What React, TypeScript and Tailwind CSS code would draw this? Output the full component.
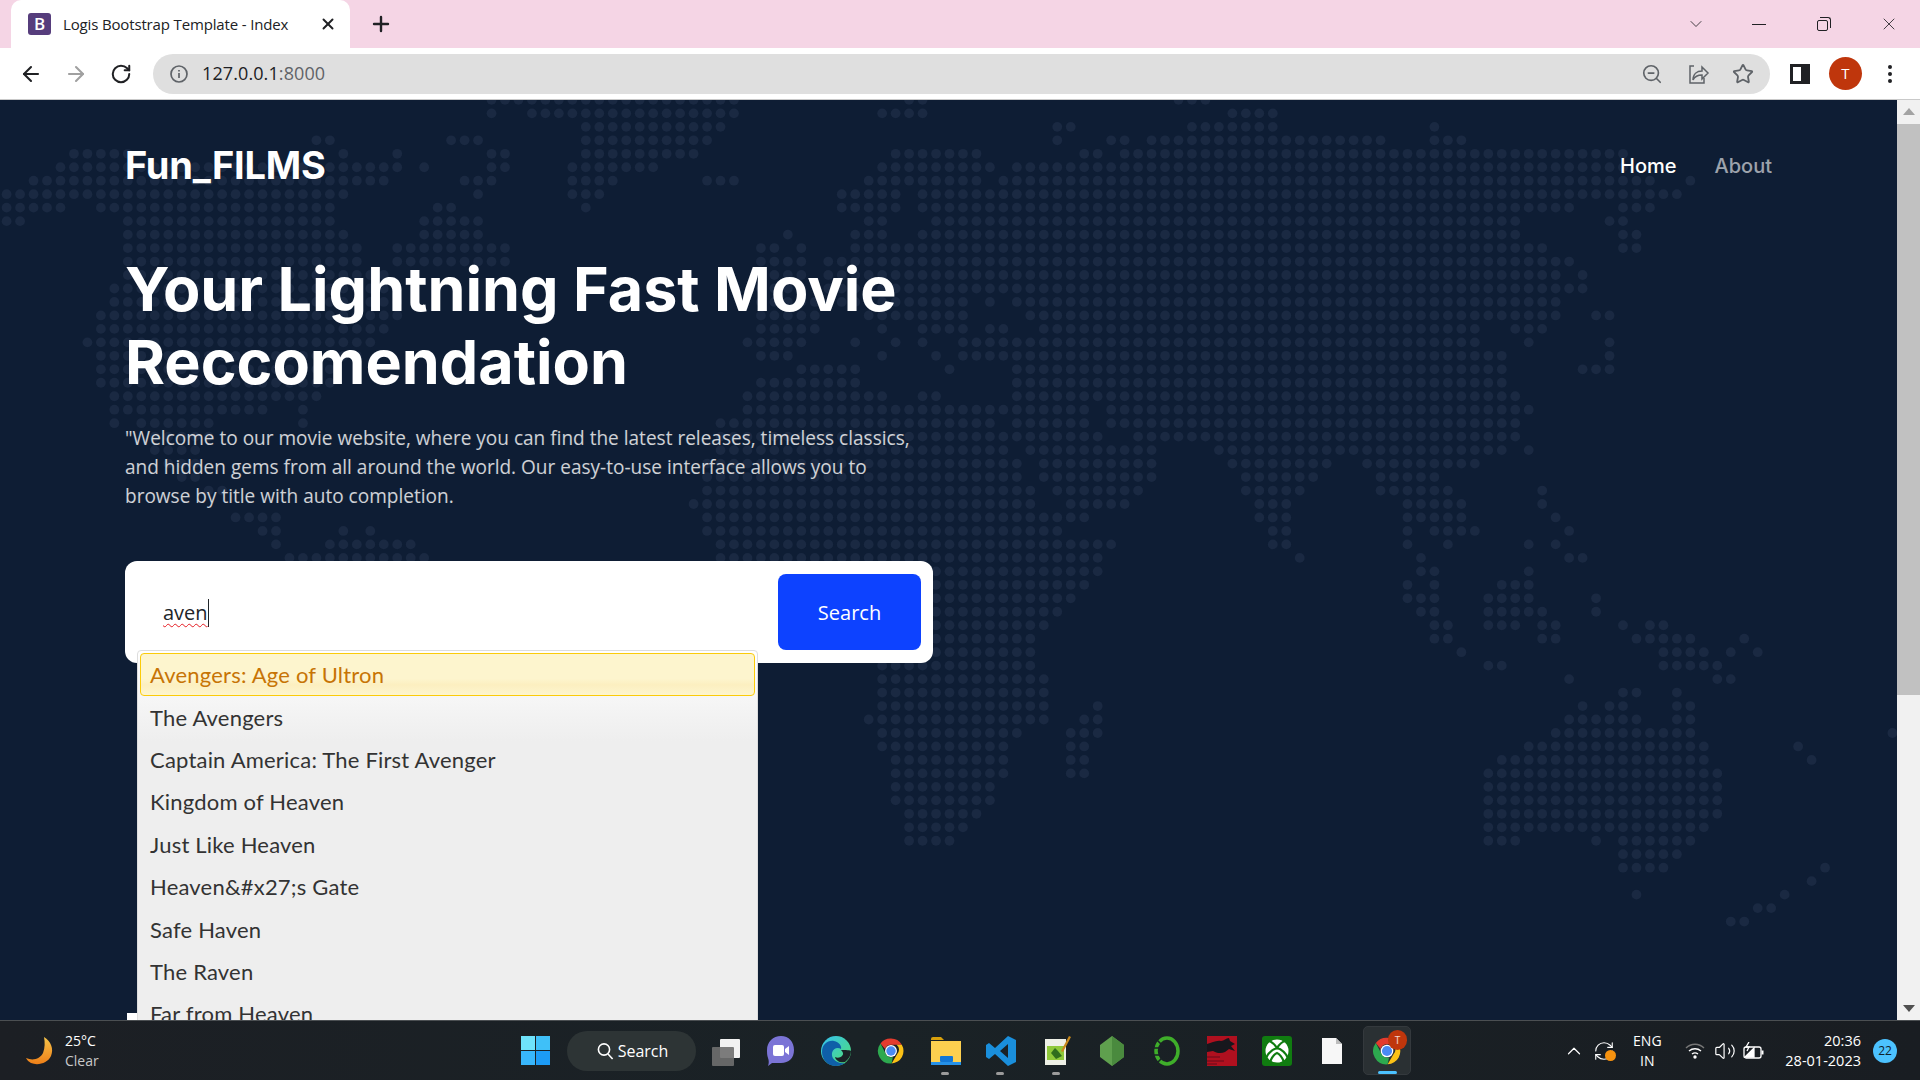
import { ArrowLeft, ArrowRight, ChevronDown, ChevronUp, Plus, RefreshCw, RotateCw, Star, Volume2, X, ZoomOut } from "lucide-react";

// runs of land dots: [row, fromX, toX, fromX, toX, ...] in page pixels
const MAP_ROWS: number[][] = [
  [0, 490, 735, 906, 925, 1178, 1207],
  [1, 490, 490, 527, 738, 878, 925, 1228, 1275],
  [2, 582, 726, 1053, 1075, 1189, 1275, 1436, 1436],
  [3, 318, 331, 450, 481, 582, 710, 1057, 1057, 1111, 1129, 1150, 1386, 1432, 1468],
  [4, 70, 125, 343, 343, 398, 398, 490, 508, 582, 698, 893, 979, 1082, 1100, 1121, 1629],
  [5, 55, 398, 423, 423, 490, 508, 570, 658, 879, 993, 1014, 1618],
  [6, 28, 389, 462, 496, 570, 615, 704, 738, 868, 979, 1004, 1654, 1691, 1691],
  [7, 0, 346, 478, 478, 570, 603, 839, 900, 921, 1682],
  [8, 0, 61, 98, 334, 438, 453, 585, 585, 839, 900, 921, 1575, 1621, 1654],
  [9, 0, 21, 125, 334, 423, 481, 868, 886, 932, 1521, 1607, 1629],
  [10, 125, 346, 423, 481, 789, 789, 854, 886, 921, 1521, 1621, 1643],
  [11, 125, 361, 395, 508, 760, 775, 799, 799, 854, 1546, 1621, 1643],
  [12, 125, 361, 395, 508, 760, 808, 825, 1575],
  [13, 125, 380, 760, 800, 825, 1561, 1584, 1584],
  [14, 110, 398, 760, 808, 825, 1589],
  [15, 110, 398, 760, 818, 840, 968, 989, 989, 1014, 1561],
  [16, 98, 398, 760, 818, 868, 968, 1029, 1561, 1596, 1614],
  [17, 98, 389, 760, 818, 882, 882, 921, 968, 989, 1007, 1043, 1479, 1514, 1546],
  [18, 83, 374, 744, 787, 800, 800, 854, 854, 896, 896, 921, 921, 961, 1479, 1529, 1529, 1611, 1611],
  [19, 98, 361, 760, 793, 882, 882, 936, 936, 961, 1507, 1611, 1611],
  [20, 98, 334, 799, 857, 950, 950, 1014, 1507, 1582, 1611],
  [21, 98, 334, 760, 857, 1014, 1507],
  [22, 110, 321, 744, 888, 921, 939, 1014, 1521],
  [23, 110, 266, 303, 303, 744, 1086, 1111, 1529],
  [24, 110, 110, 135, 211, 303, 303, 716, 993, 1014, 1086, 1111, 1521],
  [25, 153, 214, 716, 1100, 1136, 1518],
  [26, 153, 199, 716, 1007, 1029, 1154, 1218, 1507, 1534, 1534],
  [27, 165, 199, 704, 1021, 1043, 1154, 1229, 1332, 1364, 1479],
  [28, 178, 199, 704, 1021, 1043, 1154, 1243, 1318, 1379, 1439],
  [29, 202, 220, 704, 1036, 1054, 1143, 1243, 1304, 1379, 1454, 1543, 1543],
  [30, 689, 1036, 1068, 1129, 1257, 1289, 1404, 1464, 1543, 1543],
  [31, 239, 279, 704, 1089, 1257, 1289, 1404, 1464, 1557, 1557],
  [32, 260, 279, 343, 343, 370, 370, 704, 1061, 1271, 1289, 1407, 1407, 1432, 1479, 1570, 1570],
  [33, 276, 276, 325, 413, 716, 1114, 1271, 1289, 1407, 1407, 1449, 1449, 1529, 1529, 1559, 1559],
  [34, 285, 429, 716, 1100, 1299, 1299, 1421, 1421, 1568, 1586],
  [35, 716, 1101, 1422, 1437, 1530, 1530],
  [36, 716, 1086, 1407, 1407, 1437, 1437, 1500, 1530],
  [37, 934, 1071, 1407, 1437, 1489, 1530, 1597, 1597],
  [38, 934, 1060, 1422, 1437, 1489, 1543, 1597, 1597],
  [39, 934, 1045, 1437, 1448, 1489, 1515, 1543, 1556, 1625, 1625, 1651, 1665],
  [40, 934, 1032, 1437, 1448, 1543, 1556, 1638, 1692, 1746, 1746],
  [41, 934, 1032, 1463, 1463, 1665, 1705, 1731, 1731, 1757, 1757],
  [42, 881, 1032, 1489, 1502, 1665, 1719],
  [43, 881, 1045, 1569, 1569, 1719, 1732],
  [44, 881, 1045, 1625, 1638, 1679, 1679],
  [45, 881, 1045, 1097, 1097, 1584, 1584, 1610, 1625, 1679, 1692],
  [46, 868, 1045, 1084, 1097, 1569, 1638, 1679, 1692],
  [47, 881, 1019, 1071, 1097, 1556, 1692, 1892, 1892],
  [48, 881, 1005, 1071, 1084, 1530, 1705, 1800, 1800],
  [49, 894, 1005, 1071, 1084, 1502, 1705, 1811, 1811],
  [50, 894, 1005, 1071, 1084, 1489, 1719],
  [51, 894, 990, 1489, 1719],
  [52, 894, 990, 1489, 1719],
  [53, 908, 978, 1489, 1719],
  [54, 908, 964, 1489, 1705],
  [55, 908, 950, 1489, 1515, 1597, 1597, 1625, 1692],
  [56, 1625, 1679],
  [57, 1625, 1665, 1826, 1826],
  [58, 1813, 1813],
  [59, 1638, 1638, 1785, 1785],
  [60, 1757, 1771],
  [61, 1732, 1744],
];

const DOTS: { x: number; y: number }[] = [];
for (const row of MAP_ROWS) {
  for (let i = 1; i < row.length; i += 2) {
    const first = Math.ceil((row[i] - 6 - 6.6) / 13.47);
    const last = Math.floor((row[i + 1] + 6 - 6.6) / 13.47);
    for (let c = first; c <= last; c++) {
      DOTS.push({ x: 6.6 + 13.47 * c, y: 99.9 + 13.47 * row[0] - 100 });
    }
  }
}

const SUGGESTIONS = [
  "The Avengers",
  "Captain America: The First Avenger",
  "Kingdom of Heaven",
  "Just Like Heaven",
  "Heaven&#x27;s Gate",
  "Safe Haven",
  "The Raven",
  "Far from Heaven",
];

function WorldMap() {
  return (
    <svg className="absolute left-0 top-0 h-[920px] w-[1897px]" viewBox="0 0 1897 920">
      {DOTS.map((d) => (
        <circle key={`${d.x}-${d.y}`} cx={d.x} cy={d.y} r="4.9" fill="#1a2942" />
      ))}
    </svg>
  );
}

function ChromeLogo({ size = 28 }: { size?: number }) {
  return (
    <svg width={size} height={size} viewBox="0 0 48 48">
      <path d="M24 4a20 20 0 0 1 17.3 10H24a10 10 0 0 0-9.5 6.9L7.2 12A20 20 0 0 1 24 4z" fill="#e33b2e" />
      <path d="M41.3 14A20 20 0 0 1 25 44l8.7-15A10 10 0 0 0 33 14z" fill="#fbc116" />
      <path d="M7.2 12l8.8 17a10 10 0 0 0 11 4.6L25 44A20 20 0 0 1 7.2 12z" fill="#2da94f" />
      <circle cx="24" cy="24" r="9.5" fill="#fff" />
      <circle cx="24" cy="24" r="7.6" fill="#4a8af4" />
    </svg>
  );
}

function TaskIcon({ children, active = false, dot = false }: { children: React.ReactNode; active?: boolean; dot?: boolean }) {
  return (
    <div className={`relative flex h-[49px] w-[48px] shrink-0 items-center justify-center rounded-[5px] ${active ? "border border-[#34393d] bg-[#2a3033]" : ""}`}>
      {children}
      {dot && <span className="absolute bottom-[0px] left-[19px] h-[3px] w-[8px] rounded-full bg-[#9b9b9b]" />}
      {active && <span className="absolute bottom-[0px] left-[14px] h-[3px] w-[19px] rounded-full bg-[#4cc2ff]" />}
    </div>
  );
}

function Taskbar() {
  return (
    <footer className="relative z-20 flex h-[60px] shrink-0 items-center border-t border-[#4b4f52] bg-[linear-gradient(90deg,#1c1f24,#1a2226_45%,#191d22)] font-['Open_Sans',sans-serif] text-white">
      {/* weather */}
      <div className="flex w-[505px] shrink-0 items-center pl-[25px]">
        <svg width="30" height="30" viewBox="0 0 30 30">
          <defs>
            <linearGradient id="moon" x1="0" y1="0" x2="0" y2="1">
              <stop offset="0" stopColor="#f6c44a" />
              <stop offset="1" stopColor="#ee7f18" />
            </linearGradient>
          </defs>
          <path d="M19 1c7 4 10 12 7 19-3 7-13 10-20 7-2-1-4-3-5-5 7 3 14 1 17-5 2-5 2-11 1-16z" fill="url(#moon)" />
        </svg>
        <div className="ml-[10px] text-[14px] leading-[20px]">
          <div>25°C</div>
          <div className="text-[#c9c9c9]">Clear</div>
        </div>
      </div>

      {/* start + search */}
      <div className="flex w-[60px] shrink-0 items-center justify-center">
        <div className="grid h-[29px] w-[29px] grid-cols-2 gap-[1px]">
          <span className="bg-[#6fe3fb]" />
          <span className="bg-[#3fc0f8]" />
          <span className="bg-[#38b6fb]" />
          <span className="bg-[#1c9bf5]" />
        </div>
      </div>
      <div className="ml-[2px] flex h-[40px] w-[129px] shrink-0 items-center justify-center gap-[3px] rounded-full bg-[#2d3435] text-[16px]">
        <svg width="20" height="20" viewBox="0 0 20 20" fill="none" stroke="#fff" strokeWidth="1.6">
          <circle cx="9" cy="8.5" r="5.6" />
          <path d="M13 13l4.6 5" />
        </svg>
        Search
      </div>

      {/* pinned apps */}
      <div className="ml-[6px] flex items-center gap-[7.1px]">
        <TaskIcon>
          <div className="relative h-[24px] w-[30px]">
            <span className="absolute right-[1px] top-0 h-[19px] w-[20px] rounded-[1px] bg-[#f2f2f2]" />
            <span className="absolute left-[1px] top-[8px] h-[19px] w-[22px] rounded-[1px] bg-[#6f6f6f]/90" />
          </div>
        </TaskIcon>
        <TaskIcon>
          <svg width="30" height="32" viewBox="0 0 30 32">
            <path d="M15 1c8 0 13 6 13 14s-5 13-13 13H6l-4 3c1-3 1-5 0-8-1-3-1-5-1-8C1 7 7 1 15 1z" fill="#7b74d6" />
            <rect x="7" y="10" width="11" height="11" rx="2" fill="#fff" />
            <path d="M19 14l4-3v9l-4-3z" fill="#fff" />
          </svg>
        </TaskIcon>
        <TaskIcon>
          <svg width="32" height="32" viewBox="0 0 32 32">
            <defs>
              <linearGradient id="edgeA" x1="0" y1="0" x2="1" y2="1">
                <stop offset="0" stopColor="#35c1f1" />
                <stop offset="1" stopColor="#50df6f" />
              </linearGradient>
            </defs>
            <circle cx="16" cy="16" r="15" fill="url(#edgeA)" />
            <path d="M2 17C2 9 8 5 14 6c5 1 8 5 7 8-3-2-8-1-9 4-1 6 5 11 13 10-3 2-6 3-9 3C8 31 2 25 2 17z" fill="#0f5fa8" />
            <path d="M21 15c4 0 10 0 10 1 0 4-2 8-6 11-5 1-9-1-10-5 2 1 5 1 7-1 2-2 1-4-1-6z" fill="#1a2226" />
          </svg>
        </TaskIcon>
        <TaskIcon>
          <ChromeLogo size={30} />
        </TaskIcon>
        <TaskIcon dot>
          <svg width="32" height="30" viewBox="0 0 32 30">
            <path d="M1 3a2 2 0 0 1 2-2h8l3 3H1z" fill="#d9a10c" />
            <rect x="1" y="5" width="30" height="24" fill="#fdd04f" />
            <rect x="10" y="20" width="13" height="6" rx="1" fill="#1277d6" />
            <rect x="1" y="26" width="30" height="3" fill="#2591e8" />
          </svg>
        </TaskIcon>
        <TaskIcon dot>
          <svg width="32" height="32" viewBox="0 0 32 32">
            <path d="M23 1l8 4v22l-8 4-13-12-6 5-3-2V10l3-2 6 5zM23 9l-8 7 8 7z" fill="#1a8fdc" />
          </svg>
        </TaskIcon>
        <TaskIcon dot>
          <svg width="30" height="32" viewBox="0 0 30 32">
            <rect x="3" y="4" width="21" height="26" fill="#eef0e6" />
            <path d="M5 11h17v14H5z" fill="#8fc93a" />
            <path d="M9 18l4-5 3 3 4 5-6 3z" fill="#2f6e1d" />
            <path d="M27 1l2 1-8 15-2-1z" fill="#c8891d" />
          </svg>
        </TaskIcon>
        <TaskIcon>
          <svg width="26" height="32" viewBox="0 0 26 32">
            <path d="M13 1l12 9v12l-12 9-12-9V10z" fill="#5fa04e" />
            <path d="M13 1l12 9v12l-12 9z" fill="#4a8a3e" />
          </svg>
        </TaskIcon>
        <TaskIcon>
          <svg width="30" height="32" viewBox="0 0 30 32" fill="none">
            <ellipse cx="15" cy="16" rx="11" ry="13" stroke="#3fae2a" strokeWidth="3.5" />
            <path d="M5 5l5 5M2 13h7M2 20h7M6 27l4-4" stroke="#1a2226" strokeWidth="1.6" />
          </svg>
        </TaskIcon>
        <TaskIcon>
          <svg width="30" height="30" viewBox="0 0 30 30">
            <rect width="30" height="30" fill="#b0101f" />
            <path d="M0 8c5-1 9-4 14-3 3 0 5-3 8-3l1 3 5 3-4 2 4 5-6-2-4 3c-4 2-9 1-12-1l-6 1z" fill="#17171d" />
            <path d="M0 21h13M0 25h17M0 28h10" stroke="#7d0d1c" strokeWidth="1.5" />
          </svg>
        </TaskIcon>
        <TaskIcon>
          <svg width="30" height="30" viewBox="0 0 30 30" fill="none">
            <rect width="30" height="30" rx="3" fill="#107c10" />
            <circle cx="15" cy="15" r="11.500" fill="#fff" />
            <path d="M7 5c4 1 6 4 8 7 2-3 4-6 8-7M4 22c3-6 7-9 11-10 4 1 8 4 11 10M8 26c2-5 4-8 7-9 3 1 5 4 7 9" stroke="#107c10" strokeWidth="2.2" />
          </svg>
        </TaskIcon>
        <TaskIcon>
          <svg width="22" height="28" viewBox="0 0 22 28">
            <path d="M1 1h14l6 6v20H1z" fill="#f7f7f7" />
            <path d="M15 1v6h6z" fill="#bdbdbd" />
          </svg>
        </TaskIcon>
        <TaskIcon active>
          <ChromeLogo size={32} />
          <span className="absolute right-[3px] top-[3px] flex h-[20px] w-[19px] items-center justify-center rounded-full bg-[#bf360c] text-[10px] text-white/80">T</span>
        </TaskIcon>
      </div>

      {/* tray */}
      <div className="ml-auto flex items-center pr-[23px]">
        <ChevronUp size={22} strokeWidth={1.3} className="mr-[8px]" />
        <div className="relative mr-[14px] h-[22px] w-[22px]">
          <RefreshCw size={22} strokeWidth={1.2} />
          <span className="absolute bottom-[1px] right-[-1px] h-[11px] w-[11px] rounded-full bg-[#f6920f]" />
        </div>
        <div className="w-[36px] text-center text-[14px] leading-[20px]">
          <div>ENG</div>
          <div>IN</div>
        </div>
        <svg className="ml-[20px]" width="20" height="16" viewBox="0 0 20 16" fill="none" stroke="#fff" strokeWidth="1.4">
          <path d="M1 5c5-5 13-5 18 0" stroke="#777" />
          <path d="M4 8c3.500-3 8.500-3 12 0M7 11c2-1.500 4-1.500 6 0" />
          <circle cx="10" cy="14" r="1" fill="#fff" />
        </svg>
        <Volume2 size={22} strokeWidth={1.3} className="ml-[9px]" />
        <svg className="ml-[7px]" width="22" height="18" viewBox="0 0 22 18" fill="none" stroke="#fff" strokeWidth="1.3">
          <rect x="1" y="5" width="17" height="11" rx="2" />
          <path d="M19.500 8.500v4" strokeWidth="2" />
          <path d="M2 15l9-9v9z" fill="#fff" />
          <path d="M6 0L3 5h3L4 9" />
        </svg>
        <div className="ml-[20px] text-right text-[14.5px] leading-[20px]">
          <div>20:36</div>
          <div>28-01-2023</div>
        </div>
        <span className="ml-[12px] flex h-[24px] w-[24px] items-center justify-center rounded-full bg-[#4cc2ff] text-[12px] text-[#10202c]">22</span>
      </div>
    </footer>
  );
}

function BrowserChrome() {
  return (
    <header className="shrink-0 font-['Open_Sans',sans-serif]">
      {/* tab strip */}
      <div className="flex h-[48px] items-end bg-[#f5d5e5] pl-[11px] text-[#202124]">
        <div className="flex h-[48px] w-[339px] items-center rounded-t-[10px] bg-white pl-[17px] pr-[13px]">
          <span className="flex h-[22px] w-[23px] items-center justify-center rounded-[3px] bg-[#563d7c] text-[17px] font-semibold text-white">B</span>
          <span className="ml-[12px] whitespace-nowrap text-[15px] tracking-[-0.15px]">Logis Bootstrap Template - Index</span>
          <X size={18} strokeWidth={2.6} className="ml-auto" />
        </div>
        <Plus size={24} strokeWidth={2.4} className="mb-[12px] ml-[19px]" />
        <div className="mb-[9px] ml-auto flex h-[30px] items-center pr-[21px]">
          <ChevronDown size={20} strokeWidth={1} />
          <span className="ml-[46px] h-[1px] w-[14px] bg-[#202124]" />
          <div className="relative ml-[51px] h-[14px] w-[14px]">
            <span className="absolute bottom-0 left-0 h-[11px] w-[11px] rounded-[2px] border border-[#202124]" />
            <span className="absolute right-0 top-0 h-[11px] w-[11px] rounded-tr-[3px] border-r border-t border-[#202124]" />
          </div>
          <X size={20} strokeWidth={1} className="ml-[48px]" />
        </div>
      </div>

      {/* toolbar */}
      <div className="flex h-[52px] items-center border-b border-[#c9c9c9] bg-white pl-[19px] pr-[16px]">
        <ArrowLeft size={24} strokeWidth={2.1} className="text-[#202124]" />
        <ArrowRight size={24} strokeWidth={2.1} className="ml-[21px] text-[#a0a0a0]" />
        <RotateCw size={22} strokeWidth={2.2} className="ml-[22px] text-[#202124]" />
        <div className="ml-[21px] flex h-[40px] w-[1617px] shrink-0 items-center rounded-full bg-[#dfdfdf] pl-[16px] pr-[16px]">
          <svg width="20" height="20" viewBox="0 0 20 20" fill="none" stroke="#5f6368" strokeWidth="1.7">
            <circle cx="10" cy="10" r="8" />
            <path d="M10 9v5M10 6v1.500" />
          </svg>
          <span className="ml-[13px] text-[18px] tracking-[0.1px] text-[#202124]">
            127.0.0.1<span className="text-[#5f6368]">:8000</span>
          </span>
          <ZoomOut size={22} strokeWidth={1.8} className="ml-auto text-[#5f6368]" />
          <svg className="ml-[25px]" width="22" height="22" viewBox="0 0 22 22" fill="none" stroke="#5f6368" strokeWidth="1.5">
            <path d="M6 3H2v17h14v-5" />
            <path d="M5 17c0-6 4-9 9-9V4l6 6-6 6v-4c-4 0-7 1-9 5z" />
          </svg>
          <Star size={22} strokeWidth={2} className="ml-[22px] text-[#5f6368]" />
        </div>
        <div className="ml-[20px] flex h-[20px] w-[20px] shrink-0 justify-start border-[3px] border-[#202124] bg-white">
          <span className="ml-auto h-full w-[6px] bg-[#202124]" />
        </div>
        <span className="ml-[19px] flex h-[33px] w-[33px] shrink-0 items-center justify-center rounded-full bg-[#bf360c] text-[15px] text-white">T</span>
        <div className="ml-[26px] flex flex-col gap-[3px]">
          <span className="h-[4px] w-[4px] rounded-full bg-[#202124]" />
          <span className="h-[4px] w-[4px] rounded-full bg-[#202124]" />
          <span className="h-[4px] w-[4px] rounded-full bg-[#202124]" />
        </div>
      </div>
    </header>
  );
}

function SearchBox() {
  return (
    <div className="relative mt-[50px] flex h-[102px] w-[808px] items-center rounded-[12px] bg-white pl-[38px] pr-[12px] font-['Open_Sans',sans-serif]">
      <span className="flex items-center pt-[2px] text-[20px] leading-[28px] text-[#212529]">
        <span className="underline decoration-[#e51c23] decoration-wavy decoration-1 underline-offset-[3px]">aven</span>
        <span className="h-[28px] w-[1px] bg-[#212529]" />
      </span>
      <button className="ml-auto flex h-[76px] w-[143px] items-center justify-center rounded-[8px] bg-[#0d42ff] pt-[2px] text-[20px] font-medium text-white">Search</button>

      {/* autocomplete menu */}
      <div className="absolute left-[12px] top-[89px] z-10 h-[400px] w-[621px] rounded-t-[4px] border border-[#dddddd] bg-[linear-gradient(180deg,#ffffff,#eeeeee_90px)] p-[2px] font-['Lato',sans-serif] text-[22px] tracking-[0.2px] text-[#333333]">
        <div className="flex h-[43px] items-center rounded-[4px] border border-[#fbcb09] bg-[linear-gradient(180deg,#fdf5ce_60%,#fcefc0_75%,#fdf5ce)] px-[9px] text-[#c77405]">Avengers: Age of Ultron</div>
        {SUGGESTIONS.map((title) => (
          <div key={title} className="flex h-[42.4px] items-center px-[10px]">
            {title}
          </div>
        ))}
      </div>
    </div>
  );
}

export default function App() {
  return (
    <div className="flex h-screen w-screen flex-col overflow-hidden bg-[#0e1d34]">
      <BrowserChrome />
      <main className="flex min-h-0 flex-1">
        <section className="relative min-w-0 flex-1 overflow-hidden bg-[#0e1d34]">
          <WorldMap />
          <div className="relative px-[125px]">
            <nav className="flex h-[131px] items-center justify-between">
              <span className="font-['Inter',sans-serif] text-[38px] font-bold tracking-[-0.2px] text-white">Fun_FILMS</span>
              <div className="flex gap-[38px] font-['Inter',sans-serif] text-[20px] font-medium">
                <span className="text-white">Home</span>
                <span className="text-white/60">About</span>
              </div>
            </nav>
            <h1 className="mt-[22px] w-[900px] font-['Inter',sans-serif] text-[61px] font-bold leading-[73px] text-white">
              Your Lightning Fast Movie Reccomendation
            </h1>
            <p className="mt-[25px] w-[800px] font-['Open_Sans',sans-serif] text-[19.05px] leading-[29px] text-white/80">
              "Welcome to our movie website, where you can find the latest releases, timeless classics, and hidden gems from all around the world. Our easy-to-use interface allows you to browse by title with auto completion.
            </p>
            <SearchBox />
            <div className="mt-[350px] ml-[2px] h-[20px] w-[10px] bg-white" />
          </div>
        </section>
        {/* page scrollbar */}
        <div className="flex w-[23px] shrink-0 flex-col items-center bg-[#f1f1f1]">
          <span className="mt-[8px] h-0 w-0 border-x-[6px] border-b-[7px] border-x-transparent border-b-[#a3a3a3]" />
          <div className="mt-[9px] h-[571px] w-full bg-[#c1c1c1] pl-0" />
          <span className="mt-auto mb-[8px] h-0 w-0 border-x-[6px] border-t-[7px] border-x-transparent border-t-[#505050]" />
        </div>
      </main>
      <Taskbar />
    </div>
  );
}
